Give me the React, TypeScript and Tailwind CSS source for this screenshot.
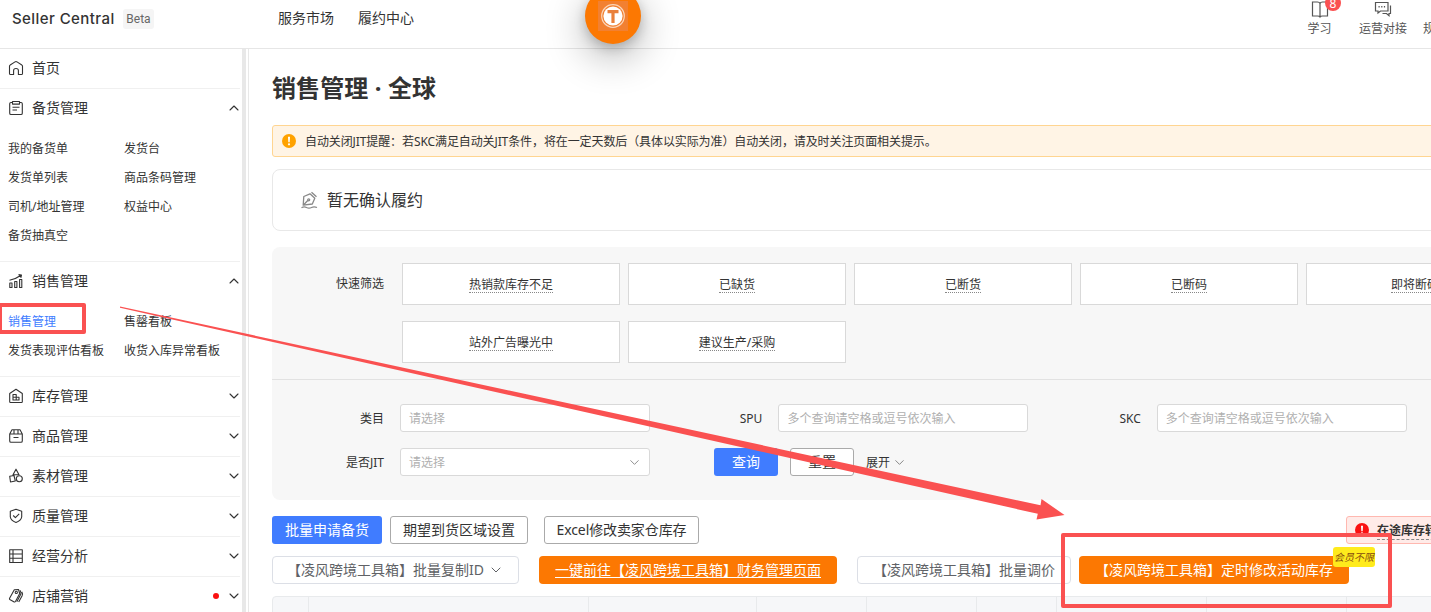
import type { ReactNode } from 'react';
import { ChevronDown, ChevronUp } from 'lucide-react';

type MenuGroup = {
  name: string;
  icon: ReactNode;
  children?: string[];
  open?: boolean;
  dot?: boolean;
  leaf?: boolean;
};

const Icon = ({ children }: { children: ReactNode }) => (
  <svg
    width="16"
    height="16"
    viewBox="0 0 16 16"
    fill="none"
    stroke="currentColor"
    strokeWidth="1.1"
    strokeLinejoin="round"
    className="shrink-0"
  >
    {children}
  </svg>
);

const menu: MenuGroup[] = [
  {
    name: '首页',
    leaf: true,
    icon: <path d="M5.6 14.5H2.6Q1.500 14.500 1.500 13.400V6.200Q1.500 5.400 2.200 5L7 1.900Q8 1.300 9 1.900L13.800 5Q14.500 5.400 14.500 6.200V13.400Q14.500 14.500 13.400 14.500H10.400V10.500Q10.400 8.500 8 8.500T5.600 10.500Z" />,
  },
  {
    name: '备货管理',
    open: true,
    children: ['我的备货单', '发货台', '发货单列表', '商品条码管理', '司机/地址管理', '权益中心', '备货抽真空'],
    icon: (
      <>
        <path d="M4.500 2.500H3Q1.700 2.500 1.700 3.800V13.200Q1.700 14.500 3 14.500H13Q14.300 14.500 14.300 13.200V3.800Q14.300 2.500 13 2.500H11.500" />
        <path d="M4.500 1.500h7v2.600h-7zM4.500 7.300h7M4.500 10h4.500" />
      </>
    ),
  },
  {
    name: '销售管理',
    open: true,
    children: ['销售管理', '售罄看板', '发货表现评估看板', '收货入库异常看板'],
    icon: (
      <path d="M1.800 10h2.200v4.500H1.800zM6.700 8.500h2.200v6H6.700zM11.600 6.500h2.200v8h-2.200zM1.500 7.300Q8 6 13 2.300M10.500 1.600l3 .5-.7 2.700" />
    ),
  },
  {
    name: '库存管理',
    icon: (
      <>
        <path d="M2.500 14.500Q1.700 14.500 1.700 13.700V5.500L8 1.300l6.300 4.200v8.200q0 .8-.8.8z" />
        <path d="M5 12V6.500h3.200V12M5 9.200h6V12H4.500" />
      </>
    ),
  },
  {
    name: '商品管理',
    icon: (
      <path d="M1.700 6 4 1.800h8L14.300 6v7q0 1.300-1.300 1.300H3Q1.700 14.300 1.700 13zM1.700 6h12.600M6 1.800V6M10 1.800V6M5.500 9.500h5" />
    ),
  },
  {
    name: '素材管理',
    icon: (
      <>
        <path d="M8 1.200 11 6.800H5zM1.700 8.200l4.300-.7 1.300 5.500-4.800 1z" />
        <circle cx="11.300" cy="10.800" r="3" />
      </>
    ),
  },
  {
    name: '质量管理',
    icon: (
      <>
        <path d="m8 1.200 5.700 2V9q-.5 3.500-5.700 5.500Q2.800 12.500 2.300 9V3.200z" />
        <path d="m5.200 7.500 2.200 2.200 3.800-3.800" />
      </>
    ),
  },
  {
    name: '经营分析',
    icon: <path d="M1.700 1.700h12.600v12.800H1.700zM1.700 6h12.600M1.700 10.200h12.600M5 1.700v12.800" />,
  },
  {
    name: '店铺营销',
    dot: true,
    icon: (
      <>
        <path d="M6.300 1.800 10.500 1.500 11.700 5.500 7.500 13.500Q7 14.300 6.200 13.900L1.800 11.500Q1.200 11 1.600 10.200z" />
        <path d="M12 2.200q1.500 2.300.5 4.500L8.800 13.800M13.800 3.800q1.300 2 .2 4.200l-3.300 6" />
        <circle cx="8.300" cy="4.400" r="1.100" />
      </>
    ),
  },
];

const quickRows = [
  ['热销款库存不足', '已缺货', '已断货', '已断码', '即将断码'],
  ['站外广告曝光中', '建议生产/采购'],
];

const columns = [36, 280, 168, 110, 110, 80, 150, 140, 160];

function Header() {
  return (
    <header className="relative flex h-[49px] shrink-0 border-b border-[#e6e6e6] bg-white">
      <div className="flex h-[37px] w-[278px] shrink-0 items-center pl-3">
        <span className="w-[111px] pt-px font-['Inter'] text-[15px] font-medium tracking-[0.43px] whitespace-nowrap text-[#333]">
          Seller Central
        </span>
        <span className="flex h-5 w-[31px] items-center justify-center rounded-[3px] bg-[#f5f5f5] font-['Roboto'] text-[12px] text-[#666]">
          Beta
        </span>
      </div>
      <nav className="flex h-[35px] items-center gap-6 text-[14px]">
        <span>服务市场</span>
        <span>履约中心</span>
      </nav>

      {/* floating tool button */}
      <div className="absolute -top-3 left-[585px] z-10 flex size-14 items-center justify-center rounded-full bg-[#fc7802] shadow-[0_12px_40px_rgba(0,0,0,0.32),0_4px_12px_rgba(0,0,0,0.2)]">
        <div className="flex size-[30px] items-center justify-center bg-[#f28031]">
          <svg width="24" height="24" viewBox="0 0 24 24">
            <circle cx="12" cy="12" r="11.300" fill="none" stroke="#fbd5ba" strokeWidth="1.2" />
            <circle cx="12" cy="12" r="9.600" fill="#fff" />
            <path d="M6.500 7.700h11M12 7.700V19" stroke="#e9803c" strokeWidth="3.200" />
          </svg>
        </div>
      </div>

      <div className="ml-auto flex w-[124px] shrink-0 gap-[27px] whitespace-nowrap text-[12px] leading-[17px] text-[#555]">
        <div className="relative flex w-[25px] shrink-0 flex-col items-center">
          <svg width="18" height="20" viewBox="0 0 18 20" fill="none" stroke="#555" strokeWidth="1.200">
            <path d="M9 3.500Q8.500 2 6.500 2H1.500v14h5Q8.500 16 9 17q.5-1 2.500-1h5V2h-5Q9.500 2 9 3.500zV17" />
          </svg>
          <span>学习</span>
          <span className="absolute -top-[5px] left-[18px] flex size-4 items-center justify-center rounded-full bg-[#fa5151] pt-px text-[12px] text-white">
            8
          </span>
        </div>
        <div className="flex shrink-0 flex-col items-center">
          <svg width="18" height="20" viewBox="0 0 18 20" fill="none" stroke="#555" strokeWidth="1.200">
            <path d="M1.500 2.500h12.500v8.500H6.500l-2.500 2v-2H1.500zM16.500 5.500v8H15v2.200l-2.500-2.200H8.500" />
            <path d="M4.500 6.700h1.200M7.200 6.700h1.200M9.900 6.700h1.200" strokeWidth="1.500" />
          </svg>
          <span>运营对接</span>
        </div>
        <div className="-ml-[11px] shrink-0 pt-5">规则中心</div>
      </div>
    </header>
  );
}

function Sidebar() {
  return (
    <aside className="flex w-[249px] shrink-0 border-r border-[#e8e8e8]">
      <div className="w-[240px]">
        {menu.map((group) => (
          <div key={group.name} className="border-b border-[#f0f0f0]">
            <div className="flex h-[39px] items-center gap-2 pb-[2px] pl-2 text-[14px]">
              <Icon>{group.icon}</Icon>
              <span className="flex-1">{group.name}</span>
              {group.dot && <span className="-mr-px size-[6px] rounded-full bg-[#fa1111]" />}
              {!group.leaf &&
                (group.open ? (
                  <ChevronUp size={16} strokeWidth={1.6} className="-mr-[2px]" />
                ) : (
                  <ChevronDown size={16} strokeWidth={1.6} className="-mr-[2px]" />
                ))}
            </div>
            {group.children && (
              <div className="grid grid-cols-[116px_1fr] pt-[6px] pb-[11px] pl-2 text-[12px] leading-[29px]">
                {group.children.map((child) => (
                  <span key={child} className={child === '销售管理' ? 'text-[#407cff]' : ''}>
                    {child}
                  </span>
                ))}
              </div>
            )}
          </div>
        ))}
      </div>
      <div className="ml-[2px] w-1 bg-[#e8e8e8]" />
    </aside>
  );
}

function Warning({ color }: { color: string }) {
  return (
    <svg width="14" height="14" viewBox="0 0 14 14" className="shrink-0">
      <circle cx="7" cy="7" r="7" fill={color} />
      <path d="M6 2.800h2l-.3 5.400H6.300z" fill="#fff" />
      <circle cx="7" cy="10.300" r="1.100" fill="#fff" />
    </svg>
  );
}

function Field({ label, placeholder, select }: { label: string; placeholder: string; select?: boolean }) {
  return (
    <div className="flex h-7 w-[378.400px] shrink-0 items-center">
      <span className="w-[112px] pt-[2px] text-right">{label}</span>
      <div className="ml-4 flex h-7 w-[250px] items-center rounded-[3px] border border-[#d9d9d9] bg-white px-2 text-[#b0b0b0]">
        <span className="flex-1 pt-[2px]">{placeholder}</span>
        {select && <ChevronDown size={15} strokeWidth={1.5} className="-mr-px text-[#888]" />}
      </div>
    </div>
  );
}

function Filters() {
  return (
    <section className="mt-4 h-[253px] rounded-lg bg-[#f7f7f7] text-[12px]">
      <div className="flex h-[133px] border-b border-[#e2e2e2] pt-4">
        <span className="mr-[18px] w-[112px] text-right leading-[42px]">快速筛选</span>
        <div className="flex flex-col gap-4">
          {quickRows.map((row) => (
            <div key={row[0]} className="flex gap-2">
              {row.map((label) => (
                <button key={label} className="flex h-[42px] w-[218px] items-center justify-center border border-[#d9d9d9] bg-white">
                  <span className="border-b border-dotted border-[#888] pt-[2px] leading-[15px]">{label}</span>
                </button>
              ))}
            </div>
          ))}
        </div>
      </div>
      <div className="mt-6 flex">
        <Field label="类目" placeholder="请选择" />
        <Field label="SPU" placeholder="多个查询请空格或逗号依次输入" />
        <Field label="SKC" placeholder="多个查询请空格或逗号依次输入" />
      </div>
      <div className="mt-4 flex items-center">
        <Field label="是否JIT" placeholder="请选择" select />
        <button className="ml-[63.600px] h-7 w-16 rounded-[3px] bg-[#407cff] pb-[2px] text-[14px] text-white">查询</button>
        <button className="ml-3 h-7 w-16 rounded-[3px] border border-[#aaa] bg-white pb-[2px] text-[14px]">重置</button>
        <span className="ml-3 pt-[2px]">展开</span>
        <ChevronDown size={15} strokeWidth={1.4} className="ml-[2px] text-[#777]" />
      </div>
    </section>
  );
}

function Actions() {
  return (
    <div className="text-[14px] whitespace-nowrap">
      <div className="mt-4 flex">
        <button className="h-7 w-[110px] rounded-[3px] bg-[#407cff] pb-[2px] text-white">批量申请备货</button>
        <button className="ml-2 h-7 w-[138px] rounded-[3px] border border-[#aaa] pb-[2px]">期望到货区域设置</button>
        <button className="ml-4 h-7 w-[155px] rounded-[3px] border border-[#aaa] pb-[2px] tracking-[-0.1px]">
          Excel修改卖家仓库存
        </button>
        <div className="ml-[647px] flex h-7 w-[200px] items-center rounded-[3px] border border-[#ffb8b0] bg-[#ffebe8] pl-2 text-[12px] font-bold">
          <Warning color="#fa1111" />
          <span className="ml-2 border-b border-dashed border-[#888] pt-[2px] leading-[17px]">在途库存转移提醒</span>
        </div>
      </div>
      <div className="mt-3 flex text-[#606266]">
        <button className="flex h-7 w-[247px] items-center rounded border border-[#dcdfe6] pb-[2px] pl-[14px]">
          【凌风跨境工具箱】批量复制ID
          <ChevronDown size={16} strokeWidth={1.5} className="mt-[2px] ml-1" />
        </button>
        <button className="ml-5 h-7 w-[298px] rounded bg-[#fc7802] pb-[2px] text-white underline underline-offset-2">
          一键前往【凌风跨境工具箱】财务管理页面
        </button>
        <button className="ml-5 h-7 w-[214px] rounded border border-[#dcdfe6] pb-[2px]">【凌风跨境工具箱】批量调价</button>
        <button className="relative ml-2 h-7 w-[270px] rounded bg-[#fc7802] pb-[2px] text-white">
          【凌风跨境工具箱】定时修改活动库存
          <span className="absolute -top-[9px] -right-[26px] flex h-[20px] w-[42px] items-center justify-center rounded-[3px] bg-[#ffeb1c] text-[10px] text-[#854a10] italic">
            会员不限
          </span>
        </button>
      </div>
    </div>
  );
}

// red marks drawn over the page
function Annotations() {
  return (
    <>
      <div className="pointer-events-none absolute top-[303px] -left-[2px] h-[31px] w-[88px] rounded-[2px] border-4 border-[#fa5151]" />
      <div className="pointer-events-none absolute top-[533px] left-[1061px] h-[75px] w-[331px] rounded-[2px] border-4 border-[#fa5151]" />
      <svg className="pointer-events-none absolute top-0 left-0" width="1431" height="612" viewBox="0 0 1431 612">
        <path d="M120 306.500 1040.500 505.300 1041.500 499 1064.500 515 1036.500 519.500 1037.800 513.800 120 307.700Z" fill="#fa5151" />
      </svg>
    </>
  );
}

export default function App() {
  return (
    <div className="relative flex h-[612px] w-[1431px] flex-col overflow-hidden bg-white font-['Noto_Sans','Noto_Sans_CJK_SC',sans-serif] text-[#333]">
      <Header />
      <div className="flex min-h-0 flex-1">
        <Sidebar />
        <main className="w-[1182px] shrink-0 pl-[23px]">
          <div className="w-[1300px]">
            <h1 className="pt-[21px] text-[24px] leading-9 font-bold tracking-[0.1px]">销售管理 · 全球</h1>
            <div className="mt-[19px] flex h-8 items-center rounded-[3px] border border-[#ffd591] bg-[#fff4e5] pl-[9px] text-[12px]">
              <Warning color="#ffa200" />
              <span className="ml-[9px] pt-[2px] tracking-[-0.1px]">
                自动关闭JIT提醒：若SKC满足自动关JIT条件，将在一定天数后（具体以实际为准）自动关闭，请及时关注页面相关提示。
              </span>
            </div>
            <div className="mt-3 flex h-[62px] items-center rounded-lg border border-[#e8e8e8] pl-7">
              <svg width="17" height="19" viewBox="0 0 17 19" fill="none" stroke="#888" strokeWidth="1.300" strokeLinejoin="round">
                <path d="M2.200 14.200 2.800 5.500 9 2.800l4.800 4.400-2.500 5.800zM2.200 14.200 7 9.300M10.500 1.300l5 4.500M.5 16.800q2.500-1.500 5-.3t5 0 5.500 0" />
                <circle cx="7.700" cy="8.800" r="1" />
              </svg>
              <span className="ml-[9px] text-[16px]">暂无确认履约</span>
            </div>
            <Filters />
            <Actions />
            <div className="mt-3 flex h-10 rounded-t border border-[#e8eaec] bg-[#f6f7f9]">
              {columns.map((w, i) => (
                <div key={i} className="shrink-0 border-r border-[#e8eaec]" style={{ width: w }} />
              ))}
            </div>
          </div>
        </main>
      </div>
      <Annotations />
    </div>
  );
}
